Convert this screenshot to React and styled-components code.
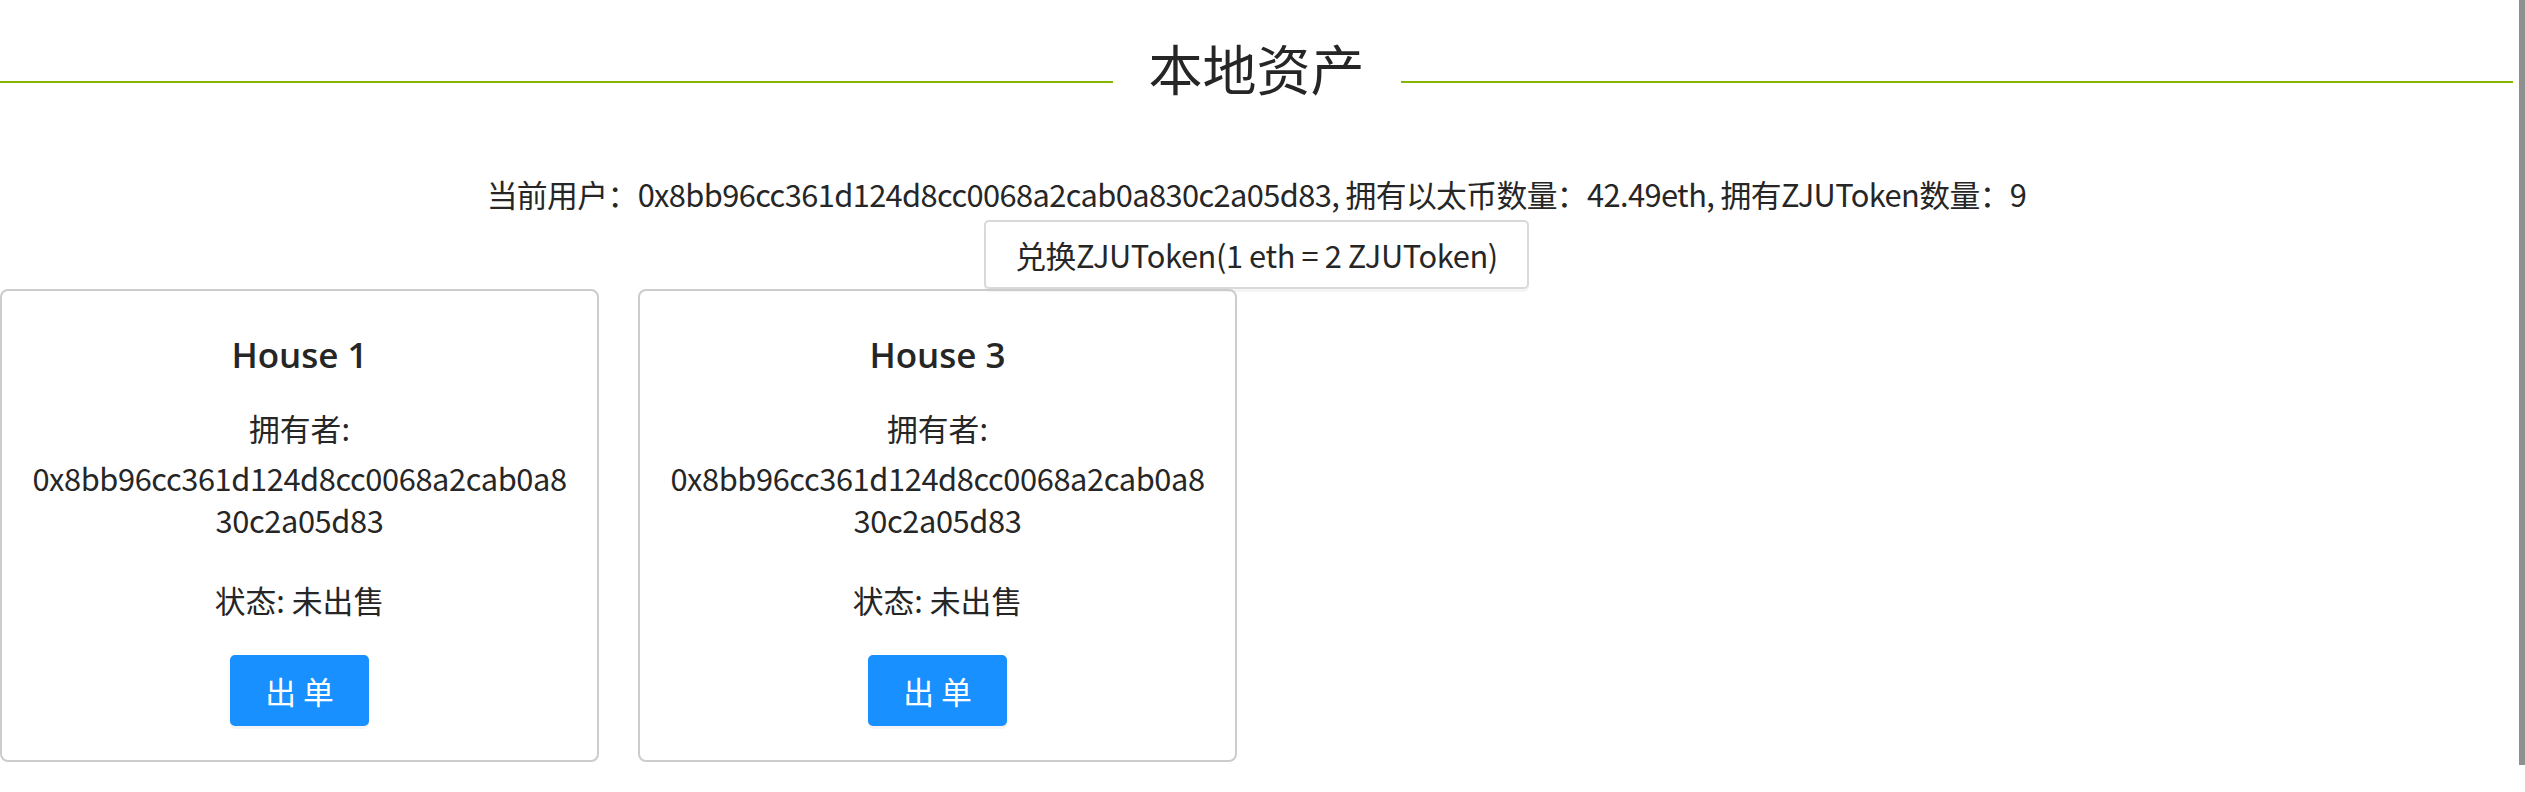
import React from "react";
import styled, { createGlobalStyle } from "styled-components";

const GlobalStyle = createGlobalStyle`
    html, body {
        overflow: hidden;
    }
    body {
        margin: 0;
        background: #ffffff;
        font-family: "Noto Sans CJK SC", sans-serif;
        color: #262626;
    }
`;

const Page = styled.div`
    padding: 41px 12px 40px 0;
`;

const ScrollThumb = styled.div`
    position: fixed;
    top: 0;
    right: 0;
    width: 6px;
    height: 765px;
    background: #8f8f8f;
`;

const Divider = styled.div`
    display: flex;
    align-items: center;
    .line {
        flex: 1;
        height: 2px;
        background: #84b500;
    }
    h3 {
        margin: 0;
        padding: 0 36px 28px;
        font-weight: 400;
        font-size: 54px;
        line-height: 54px;
        color: #262626;
    }
`;

const Info = styled.div`
    margin-top: 49px;
    text-align: center;
    font-size: 30.8px;
    letter-spacing: -0.6px;
    line-height: 44px;
`;

const ExchangeRow = styled.div`
    display: flex;
    justify-content: center;
    margin-top: 4px;
`;

const Button = styled.button`
    height: ${(p) => (p.$primary ? "71px" : "69px")};
    padding: ${(p) => (p.$primary ? "0 33px" : "0 29px")};
    border-radius: 5px;
    border: 2px solid ${(p) => (p.$primary ? "#1890ff" : "#d9d9d9")};
    background: ${(p) => (p.$primary ? "#1890ff" : "#ffffff")};
    color: ${(p) => (p.$primary ? "#ffffff" : "#262626")};
    box-shadow: 0 3px 0 rgba(0, 0, 0, 0.045);
    font-family: "Noto Sans CJK SC", sans-serif;
    font-size: 30.8px;
    letter-spacing: ${(p) => (p.$primary ? "0" : "-0.4px")};
    white-space: pre;
    cursor: pointer;
`;

const Cards = styled.div`
    display: flex;
    gap: 39px;
`;

const Card = styled.div`
    width: 599px;
    box-sizing: border-box;
    border: 2px solid #cccccc;
    border-radius: 8px;
    padding: 39px 28px 34px;
    display: flex;
    flex-direction: column;
    align-items: center;
    text-align: center;
    font-size: 30.8px;
    h5 {
        margin: 0;
        font-family: "Open Sans", "Noto Sans CJK SC", sans-serif;
        font-size: 35px;
        font-weight: 600;
        line-height: 49px;
    }
    .owner {
        margin-top: 27px;
        line-height: 44px;
    }
    .addr {
        margin-top: 7px;
        line-height: 42px;
        letter-spacing: -0.4px;
        word-break: break-all;
    }
    .status {
        margin-top: 37px;
        margin-bottom: 33px;
        line-height: 44px;
    }
`;

const account = "0x8bb96cc361d124d8cc0068a2cab0a830c2a05d83";

const houses = [
    { id: 1, owner: account, status: "未出售" },
    { id: 3, owner: account, status: "未出售" },
];

const App = () => {
    return (
        <>
            <GlobalStyle />
            <Page>
                <Divider>
                    <div className="line" />
                    <h3>本地资产</h3>
                    <div className="line" />
                </Divider>
                <Info>
                    当前用户：{account}, 拥有以太币数量：42.49eth, 拥有ZJUToken数量：9
                </Info>
                <ExchangeRow>
                    <Button>兑换ZJUToken(1 eth = 2 ZJUToken)</Button>
                </ExchangeRow>
                <Cards>
                    {houses.map((h) => (
                        <Card key={h.id}>
                            <h5>House {h.id}</h5>
                            <div className="owner">拥有者:</div>
                            <div className="addr">{h.owner}</div>
                            <div className="status">状态: {h.status}</div>
                            <Button $primary>出 单</Button>
                        </Card>
                    ))}
                </Cards>
            </Page>
            <ScrollThumb />
        </>
    );
};

export default App;
